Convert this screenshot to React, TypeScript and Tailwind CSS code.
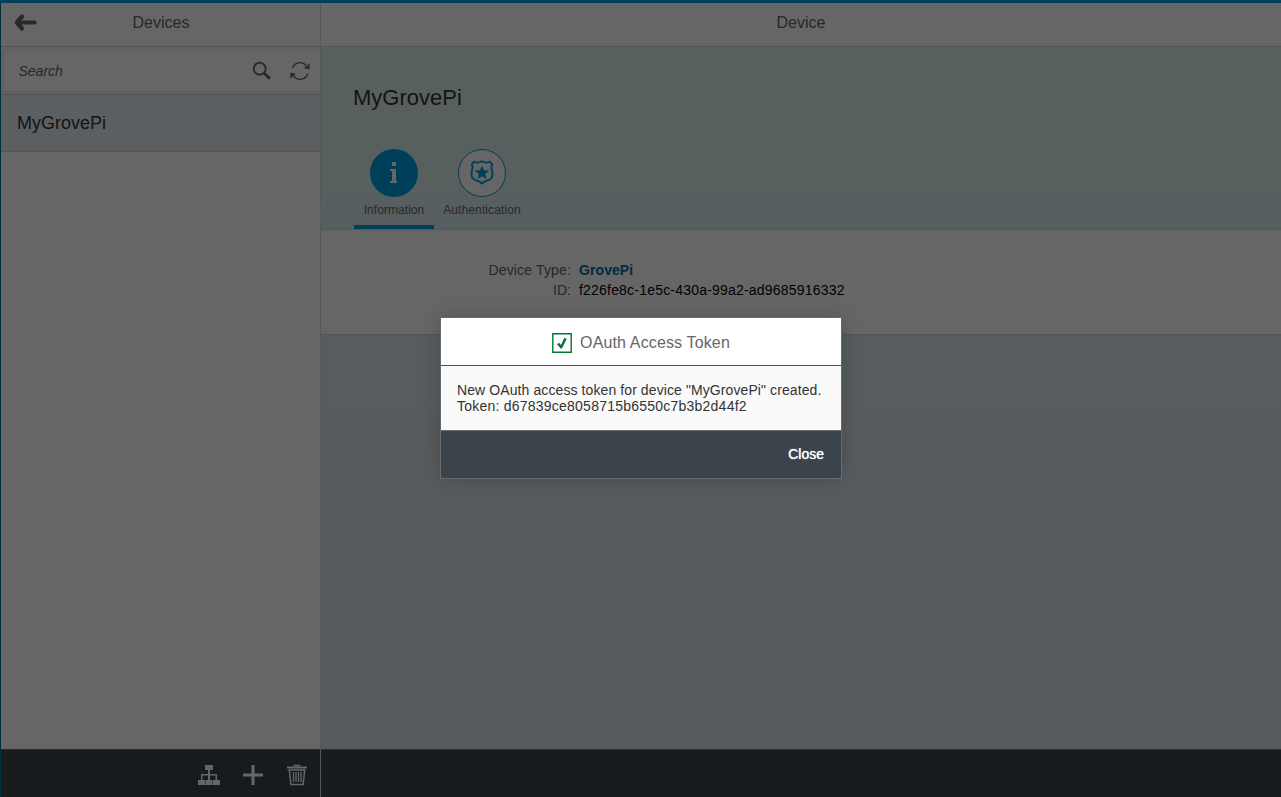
import React from "react";

function BackIcon() {
  return (
    <svg width="24" height="20" viewBox="0 0 24 20" fill="none" stroke="#666" strokeWidth="4.2" strokeLinecap="round" strokeLinejoin="round">
      <path d="M9 3.500 3.700 9.500 9 15.500M4 9.500h17.500" />
    </svg>
  );
}

function SearchIcon() {
  return (
    <svg width="20" height="20" viewBox="0 0 20 20" fill="none" stroke="#666">
      <circle cx="7.700" cy="7.700" r="6" strokeWidth="1.900" />
      <path d="m12 12 5.800 5.800" strokeWidth="2.900" />
    </svg>
  );
}

function RefreshIcon() {
  return (
    <svg width="22" height="20" viewBox="0 0 22 20" fill="none" stroke="#666" strokeWidth="1.300">
      <path d="M3.200 7.300A8.200 8.200 0 0 1 17.200 4.500M18.800 12.700A8.200 8.200 0 0 1 4.800 15.500" />
      <path d="M20.600 2.500v6l-5.800-1.500ZM1.400 17.500v-6l5.800 1.500Z" fill="#666" stroke="none" />
    </svg>
  );
}

function TreeIcon() {
  return (
    <svg width="24" height="22" viewBox="0 0 24 22" fill="#fff">
      <path d="M8 1h8v5h-3v4h7v6h3v5h-7v-5h2.500v-4.500H13V16h2.500v5H8.500v-5H11v-4.500H5.500V16H8v5H1v-5h3v-6h7V6H8Z" />
    </svg>
  );
}

function TrashIcon() {
  return (
    <svg width="22" height="22" viewBox="0 0 22 22" fill="none" stroke="#fff">
      <path d="M7.500 1.500h7" strokeWidth="1.500" />
      <path d="M1 3.500h20" strokeWidth="2" />
      <path d="m3.300 6 1.600 14.500h12.200L18.700 6Z" strokeWidth="1.500" />
      <path d="M7.500 8v10M10 8v10M12.500 8v10M15 8v10" strokeWidth="1.300" />
    </svg>
  );
}

function BadgeIcon() {
  return (
    <svg width="24" height="26" viewBox="0 0 24 26" fill="none" stroke="#009de0" strokeWidth="1.900" strokeLinejoin="round">
      <path d="M4 1.500c2 1.300 4 1.400 6 .5 1.200-.6 2.800-.6 4 0 2 .9 4 .8 6-.5l2.300 3c-1.300 1.500-1.100 3-.5 5 .9 3.500 1.200 6.500-.3 8.500-1.300 1.700-3.400 2.300-5.500 3-1.700.6-3 1.400-4 2.500-1-1.100-2.300-1.900-4-2.500-2.100-.7-4.200-1.300-5.500-3C1 16 1.300 13 2.200 9.500c.6-2 .8-3.500-.5-5Z" />
      <path d="m12 5.500 2 4.700 5.200.4-4 3.300 1.300 5-4.500-2.700-4.500 2.700 1.300-5-4-3.300 5.200-.4Z" fill="#009de0" stroke="none" />
    </svg>
  );
}

export default function App() {
  return (
    <div className="relative flex h-[797px] w-[1281px] flex-col overflow-hidden bg-white font-['Liberation_Sans',Arial,sans-serif] text-[#333]">
      <div className="h-[3px] shrink-0 bg-[#009de0]" />
      <div className="flex min-h-0 flex-1">
        <aside className="flex w-[321px] flex-col border-r border-r-[#dbdbdb] border-l border-l-[#007b8f]">
          <header className="grid h-11 grid-cols-[48px_224px_1fr] items-center border-b border-[#d5d5d5]">
            <div className="flex pb-1 pl-3">
              <BackIcon />
            </div>
            <h1 className="pb-1 text-center text-base text-[#666]">Devices</h1>
          </header>
          <div className="h-12 border-b border-[#d5d5d5] bg-[#f2f2f2] pt-1 pl-1">
            <div className="flex h-10 items-center bg-white pr-[9px] pl-[13.5px]">
              <span className="flex-1 text-sm text-[#666] italic">Search</span>
              <SearchIcon />
              <span className="ml-[17px]">
                <RefreshIcon />
              </span>
            </div>
          </div>
          <div className="flex h-[57px] items-center border-b border-[#d5d5d5] bg-[#e6edf3] pl-4 text-lg">MyGrovePi</div>
          <div className="flex-1" />
          <footer className="flex h-12 items-center justify-end border-t border-[#6c7073] bg-[#3c444b] pt-0.5 pr-3">
            <TreeIcon />
            <svg className="mr-[21px] ml-5" width="24" height="22" viewBox="0 0 24 22" stroke="#fff" strokeWidth="3">
              <path d="M12 1v20M2 11h20" />
            </svg>
            <TrashIcon />
          </footer>
        </aside>
        <main className="flex flex-1 flex-col">
          <header className="flex h-11 items-center justify-center border-b border-[#d5d5d5] pb-1 text-base text-[#666]">Device</header>
          <div className="flex flex-1 flex-col bg-linear-to-b from-[#dcf1ec] via-[#dae6eb] via-40% to-[#d9e0e5]">
            <section className="h-[183px] border-b border-[#ccd5d8] bg-linear-to-b from-[#dcf1ec] from-40% to-[#d8ebf0] pl-8">
              <h2 className="pt-[34px] text-[22px] leading-[33px]">MyGrovePi</h2>
              <div className="mt-[35px] flex text-xs text-[#666]">
                <div className="ml-px flex h-20 w-20 flex-col items-center border-b-4 border-[#009de0]">
                  <div className="flex size-12 shrink-0 items-center justify-center rounded-full bg-[#009de0]">
                    <svg width="10" height="22" viewBox="0 0 10 22" fill="#fff">
                      <path d="M3 0h4v4H3ZM1 7h6v12h1v2H1v-2h2V9H1Z" />
                    </svg>
                  </div>
                  <span className="mt-[5px] tracking-[0.06px]">Information</span>
                </div>
                <div className="ml-2 flex w-20 flex-col items-center">
                  <div className="flex size-12 shrink-0 items-center justify-center rounded-full border border-[#009de0] bg-white">
                    <BadgeIcon />
                  </div>
                  <span className="mt-[5px] tracking-[0.12px]">Authentication</span>
                </div>
              </div>
            </section>
            <section className="grid h-[105px] grid-cols-[250px_1fr] content-start gap-x-2 border-b border-[#d0d5d8] bg-white pt-[30px] text-sm leading-5">
              <span className="text-right tracking-[0.15px] text-[#666]">Device Type:</span>
              <b className="tracking-[0.08px] text-[#006ca7]">GrovePi</b>
              <span className="text-right text-[#666]">ID:</span>
              <span className="tracking-[0.2px] text-black">f226fe8c-1e5c-430a-99a2-ad9685916332</span>
            </section>
          </div>
          <footer className="h-12 border-t border-[#6c7073] bg-[#3c444b]" />
        </main>
      </div>
      <div className="absolute inset-0 bg-black/60">
        <div role="dialog" className="absolute top-[318px] left-[441px] h-40 w-[400px] bg-[#fafafa] shadow-[0_0_0_1px_#666b6e,0_0_20px_rgba(0,0,0,0.2)]">
          <div className="flex h-12 items-center justify-center gap-2 border-b border-[#007833] bg-white pt-0.5 text-base text-[#666]">
            <svg width="20" height="20" viewBox="0 0 20 20">
              <path d="M.8.800h18.400v18.400H.8Z" fill="none" stroke="#007833" strokeWidth="1.400" />
              <path d="m5 11.200 2-1.500 2 2.300 3.400-7.200 2.300 1.100-4.800 9.700H8.700Z" fill="#007833" />
            </svg>
            <span className="tracking-[0.14px]">OAuth Access Token</span>
          </div>
          <p className="h-16 px-4 pt-4 text-sm leading-4 whitespace-nowrap">
            <span className="tracking-[0.095px]">New OAuth access token for device "MyGrovePi" created.</span>
            <br />
            <span className="tracking-[0.23px]">Token: d67839ce8058715b6550c7b3b2d44f2</span>
          </p>
          <div className="flex h-12 items-center justify-end border-t border-[#6c7073] bg-[#3c444b] pr-[17px] pb-0.5 text-sm text-white [text-shadow:0_0_1px_#fff]">Close</div>
        </div>
      </div>
    </div>
  );
}
